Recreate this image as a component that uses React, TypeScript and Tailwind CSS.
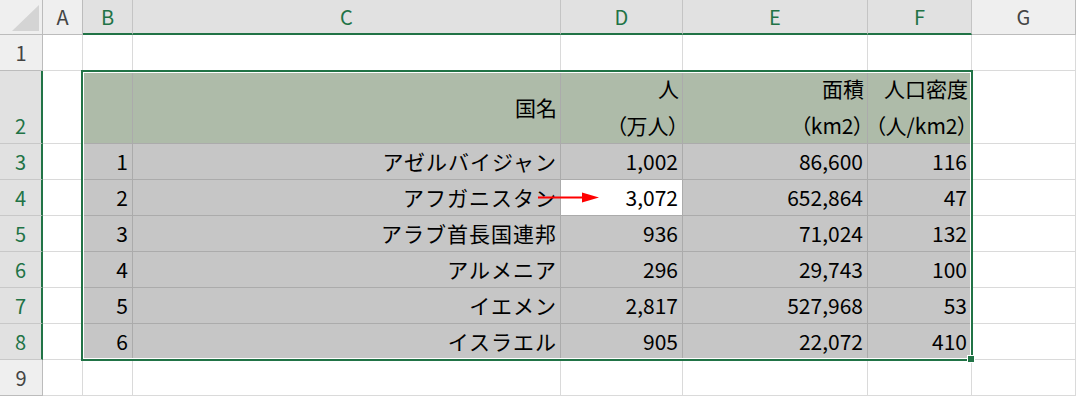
import React from 'react';

const letters = ['A', 'B', 'C', 'D', 'E', 'F', 'G'];

const rows = [
  { no: 1, name: 'アゼルバイジャン', pop: '1,002', area: '86,600', density: '116' },
  { no: 2, name: 'アフガニスタン', pop: '3,072', area: '652,864', density: '47' },
  { no: 3, name: 'アラブ首長国連邦', pop: '936', area: '71,024', density: '132' },
  { no: 4, name: 'アルメニア', pop: '296', area: '29,743', density: '100' },
  { no: 5, name: 'イエメン', pop: '2,817', area: '527,968', density: '53' },
  { no: 6, name: 'イスラエル', pop: '905', area: '22,072', density: '410' },
];

// white sheet cell
const blank = 'border-r border-b border-[#dadada] bg-white';
// cell inside the selected range
const sel = 'flex items-center justify-end pr-[4px] border-r border-b border-[#ababab] bg-[#c6c6c6] whitespace-nowrap';
const selWhite = 'flex items-center justify-end pr-[4px] border-r border-b border-[#ababab] bg-white whitespace-nowrap';
const nameCell = 'flex items-center justify-end pr-[3px] tracking-[1px] border-r border-b border-[#ababab] bg-[#c6c6c6] whitespace-nowrap';
const head = 'flex flex-col items-end justify-center pr-[3px] leading-[37px] border-r border-b border-[#ababab] bg-[#aebba9] whitespace-nowrap';

function RowHeader({ n, active }: { n: number; active?: boolean }) {
  return active ? (
    <div className="flex items-end justify-center pb-[2px] border-r-2 border-r-[#217346] border-b border-b-[#c8c8c8] bg-[#e1e1e1] text-[#217346] text-[20px] leading-[30px]">
      {n}
    </div>
  ) : (
    <div className="flex items-end justify-center pb-[2px] border-r border-b border-[#bcbcbc] bg-[#efefef] text-[#444] text-[20px] leading-[30px]">
      {n}
    </div>
  );
}

export default function App() {
  return (
    <div className="relative w-[1076px] h-[396px] overflow-hidden bg-white text-[21px] text-black font-['Noto_Sans_CJK_JP',sans-serif]">
      <div className="grid grid-cols-[43px_40px_50px_428px_122px_185px_104px_104px] grid-rows-[35px_36px_73px_36px_36px_36px_36px_36px_36px_36px]">
        {/* column headers */}
        <div className="relative border-r border-b border-[#bcbcbc] bg-[#efefef]">
          <svg className="absolute left-0 top-0" width="42" height="34" viewBox="0 0 42 34">
            <polygon points="39,5 39,31 12,31" fill="#d4d4d4" />
          </svg>
        </div>
        {letters.map((l) => {
          const on = l !== 'A' && l !== 'G';
          return on ? (
            <div
              key={l}
              className="flex items-center justify-center border-r border-r-[#c4c4c4] border-b-2 border-b-[#217346] bg-[#e1e1e1] text-[#217346] text-[20px]"
            >
              {l}
            </div>
          ) : (
            <div
              key={l}
              className="flex items-center justify-center border-r border-b border-[#bcbcbc] bg-[#efefef] text-[#444] text-[20px]"
            >
              {l}
            </div>
          );
        })}

        {/* row 1 */}
        <RowHeader n={1} />
        {letters.map((l) => (
          <div key={l} className={blank} />
        ))}

        {/* row 2: table header */}
        <RowHeader n={2} active />
        <div className={blank} />
        <div className={head} />
        <div className={head}>
          <span>国名</span>
        </div>
        <div className={head}>
          <span>人</span>
          <span className="[font-feature-settings:'palt']">（万人）</span>
        </div>
        <div className={head}>
          <span>面積</span>
          <span className="[font-feature-settings:'palt']">（km2）</span>
        </div>
        <div className={head}>
          <span>人口密度</span>
          <span className="[font-feature-settings:'palt']">（人/km2）</span>
        </div>
        <div className={blank} />

        {/* data rows */}
        {rows.map((r, i) => (
          <React.Fragment key={r.no}>
            <RowHeader n={i + 3} active />
            <div className={blank} />
            <div className={sel}>{r.no}</div>
            <div className={nameCell}>{r.name}</div>
            <div className={r.no === 2 ? selWhite : sel}>{r.pop}</div>
            <div className={sel}>{r.area}</div>
            <div className={sel}>{r.density}</div>
            <div className={blank} />
          </React.Fragment>
        ))}

        {/* row 9 */}
        <RowHeader n={9} />
        {letters.map((l) => (
          <div key={l} className={blank} />
        ))}
      </div>

      {/* selection frame */}
      <div className="absolute left-[81px] top-[70px] w-[892px] h-[291px] border-2 border-[#217346] shadow-[inset_0_0_0_1px_#ffffff] pointer-events-none" />
      {/* fill handle */}
      <div className="absolute left-[967px] top-[355px] w-[8px] h-[8px] bg-[#217346] border border-white" />

      {/* red arrow */}
      <svg className="absolute left-[536px] top-[190px]" width="66" height="15" viewBox="0 0 66 15">
        <line x1="2" y1="7.5" x2="52" y2="7.5" stroke="#ff0000" strokeWidth="2" />
        <polygon points="46,2.5 63,7.5 46,12.5" fill="#ff0000" />
      </svg>
    </div>
  );
}
